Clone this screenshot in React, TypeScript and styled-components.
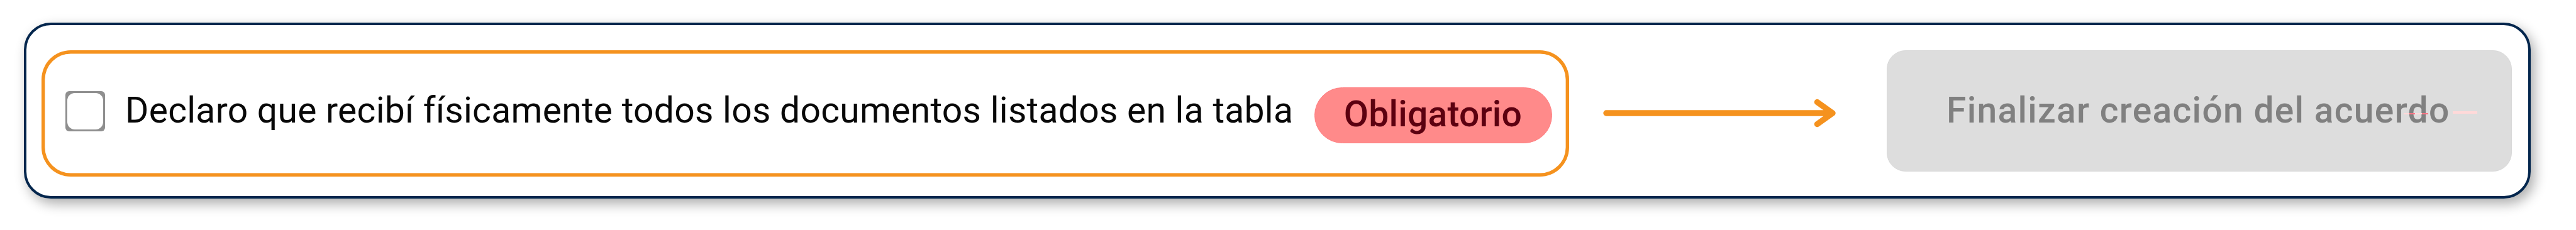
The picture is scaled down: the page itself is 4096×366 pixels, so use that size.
import React from "react"
import styled, { createGlobalStyle } from "styled-components"

const GlobalStyle = createGlobalStyle`
  body {
    margin: 0;
    background-color: #fff;
    font-family: Roboto, "Liberation Sans", sans-serif;
  }
`

const App: React.FC = () => {
  return (
    <>
      <GlobalStyle />
      <Page>
        <Panel>
          <Declaration.Box>
            <Declaration.Checkbox />
            <Declaration.Label>Declaro que recibí físicamente todos los documentos listados en la tabla</Declaration.Label>
            <Declaration.Badge>Obligatorio</Declaration.Badge>
          </Declaration.Box>
          <Arrow viewBox="0 0 372 46">
            <path d="M5 23H365M340.500 5.500L365 23L340.500 40.500" />
          </Arrow>
          <SubmitButton disabled>
            Finalizar creación del acuerdo
            <Mark left={821} top={99} width={39} height={2} />
            <Mark left={830} top={99} width={9} height={2} strong />
            <Mark left={850} top={99} width={10} height={2} strong />
            <Mark left={899} top={96} width={39} height={4} />
          </SubmitButton>
        </Panel>
      </Page>
    </>
  )
}

const Page = styled.div`
  box-sizing: border-box;
  width: 4096px;
  height: 366px;
  padding: 36px 72.5px 50px 38px;
  overflow: hidden;
`

const Panel = styled.div`
  display: flex;
  align-items: flex-start;
  box-sizing: border-box;
  height: 280px;
  padding: 40px 26px 0 23.5px;
  border: 4px solid #03264d;
  border-radius: 43px;
  background-color: #fff;
  box-shadow: 6px 8px 20px rgba(0, 0, 0, 0.33);
`

const Declaration = {
  Box: styled.div`
    display: flex;
    align-items: center;
    flex: none;
    box-sizing: border-box;
    width: 2429px;
    height: 200.5px;
    padding: 0 27px 7px 38px;
    border-radius: 46.5px;
    box-shadow: inset 0 0 0 5.4px #f5921e;
  `,
  Checkbox: styled.span`
    flex: none;
    box-sizing: border-box;
    width: 63.5px;
    height: 64.5px;
    padding: 3.5px;
    border-radius: 6px;
    background-color: #8f8f8f;

    &::before {
      content: "";
      display: block;
      height: 100%;
      border-radius: 12px;
      background-color: #fff;
    }
  `,
  Label: styled.span`
    margin: 0 0 2px 32px;
    font-size: 57px;
    letter-spacing: 0.26px;
    line-height: 66px;
    color: #080808;
    white-space: nowrap;
  `,
  Badge: styled.span`
    display: flex;
    align-items: center;
    justify-content: center;
    flex: none;
    box-sizing: border-box;
    width: 378px;
    height: 89px;
    margin: 13px 0 0 auto;
    padding-bottom: 4px;
    border: 1px solid #ff8083;
    border-radius: 45px;
    background-color: #ff8a8a;
    font-size: 57px;
    font-weight: 500;
    letter-spacing: 0.2px;
    color: #5c0010;
  `,
}

const Arrow = styled.svg`
  flex: none;
  width: 372px;
  height: 46px;
  margin: 77px 0 0 54.500px;
  fill: none;
  stroke: #f5921e;
  stroke-width: 9.4;
  stroke-linecap: round;
  stroke-linejoin: round;
`

const SubmitButton = styled.button`
  position: relative;
  box-sizing: border-box;
  width: 993.5px;
  height: 193px;
  margin-left: auto;
  padding: 0 0 2px 94px;
  border: 1px solid #d9d9d9;
  border-radius: 30px;
  background-color: #ddd;
  font-family: inherit;
  font-size: 57px;
  font-weight: 500;
  letter-spacing: 1.27px;
  text-align: left;
  color: #808080;
  white-space: nowrap;
`

const Mark = styled.i.withConfig({
  shouldForwardProp: (prop) => !["left", "top", "width", "height", "strong"].includes(prop),
})<{ left: number; top: number; width: number; height: number; strong?: boolean }>`
  position: absolute;
  left: ${(p) => p.left}px;
  top: ${(p) => p.top}px;
  width: ${(p) => p.width}px;
  height: ${(p) => p.height}px;
  background-color: ${(p) => (p.strong ? "#ff7484" : "#ffd9d9")};
`

export default App
